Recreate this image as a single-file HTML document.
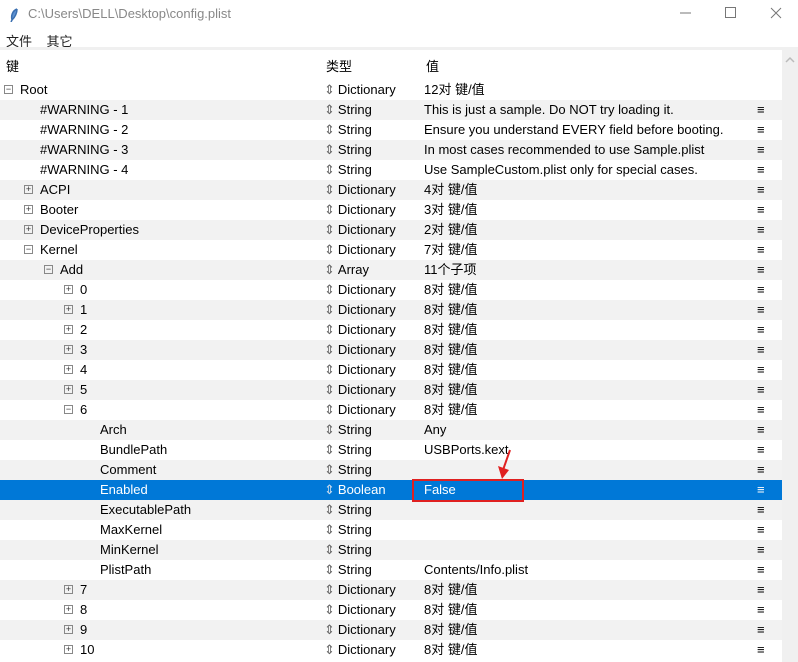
<!DOCTYPE html>
<html><head><meta charset="utf-8"><style>
*{margin:0;padding:0;box-sizing:border-box}
body{width:798px;height:662px;overflow:hidden;background:#fff;font-family:"Liberation Sans","Noto Sans CJK SC",sans-serif;font-size:13px;color:#000;position:relative}
.title{position:absolute;left:0;top:0;width:798px;height:30px;background:#fff}
.title .t{position:absolute;left:28px;top:6px;color:#888;font-size:13px}
.menu{position:absolute;top:31px;left:6px;font-size:13px;color:#222}
.strip{position:absolute;left:0;top:47px;width:798px;height:3px;background:#f0f0f0}
.sb{position:absolute;left:782px;top:50px;width:16px;height:612px;background:#f0f0f0}
.hdr{position:absolute;top:56px;font-size:13px}
.row{position:absolute;left:0;width:782px;height:20px;line-height:20px}
.g{background:#f2f2f2}
.sel{background:#0078d7;color:#fff}
.k,.ty,.v,.m{position:absolute;top:0;white-space:nowrap}
.ty{left:324px}
.ty i{font-style:normal;color:#666;margin-right:3px}
.sel .ty i{color:#cde}
.v{left:424px}
.m{left:757px;font-weight:bold}
.bx{position:absolute;top:5px;width:9px;height:9px;border:1px solid #888;font-size:9px;line-height:7px;text-align:center;color:#333}
</style></head><body>
<div class="title"><svg style="position:absolute;left:9px;top:8px" width="10" height="14"><path d="M8 1 C3 3 2 8 3 12 L2 14 M3 12 C6 9 8 5 8 1" stroke="#3a6fb0" stroke-width="1.5" fill="#5b8fd0"/></svg><span class="t">C:\Users\DELL\Desktop\config.plist</span>
<svg style="position:absolute;left:670px;top:5px" width="128" height="20"><line x1="10" y1="8" x2="21" y2="8" stroke="#777"/><rect x="55.5" y="2.5" width="10" height="10" fill="none" stroke="#777"/><path d="M101 3 L111 13 M111 3 L101 13" stroke="#777"/></svg></div>
<div class="menu">文件&nbsp;&nbsp;&nbsp;&nbsp;其它</div>
<div class="strip"></div>
<div class="sb"><svg style="position:absolute;left:3px;top:6px" width="10" height="8"><path d="M1 6 L5 2 L9 6" stroke="#bbb" fill="none" stroke-width="1.5"/></svg></div>
<div class="hdr" style="left:6px">键</div><div class="hdr" style="left:326px">类型</div><div class="hdr" style="left:426px">值</div>

<div class="row" style="top:80px"><span class="bx" style="left:4px">−</span><span class="k" style="left:20px">Root</span><span class="ty"><i>⇕</i>Dictionary</span><span class="v">12对 键/值</span></div>
<div class="row g" style="top:100px"><span class="k" style="left:40px">#WARNING - 1</span><span class="ty"><i>⇕</i>String</span><span class="v">This is just a sample. Do NOT try loading it.</span><span class="m">≡</span></div>
<div class="row" style="top:120px"><span class="k" style="left:40px">#WARNING - 2</span><span class="ty"><i>⇕</i>String</span><span class="v">Ensure you understand EVERY field before booting.</span><span class="m">≡</span></div>
<div class="row g" style="top:140px"><span class="k" style="left:40px">#WARNING - 3</span><span class="ty"><i>⇕</i>String</span><span class="v">In most cases recommended to use Sample.plist</span><span class="m">≡</span></div>
<div class="row" style="top:160px"><span class="k" style="left:40px">#WARNING - 4</span><span class="ty"><i>⇕</i>String</span><span class="v">Use SampleCustom.plist only for special cases.</span><span class="m">≡</span></div>
<div class="row g" style="top:180px"><span class="bx" style="left:24px">+</span><span class="k" style="left:40px">ACPI</span><span class="ty"><i>⇕</i>Dictionary</span><span class="v">4对 键/值</span><span class="m">≡</span></div>
<div class="row" style="top:200px"><span class="bx" style="left:24px">+</span><span class="k" style="left:40px">Booter</span><span class="ty"><i>⇕</i>Dictionary</span><span class="v">3对 键/值</span><span class="m">≡</span></div>
<div class="row g" style="top:220px"><span class="bx" style="left:24px">+</span><span class="k" style="left:40px">DeviceProperties</span><span class="ty"><i>⇕</i>Dictionary</span><span class="v">2对 键/值</span><span class="m">≡</span></div>
<div class="row" style="top:240px"><span class="bx" style="left:24px">−</span><span class="k" style="left:40px">Kernel</span><span class="ty"><i>⇕</i>Dictionary</span><span class="v">7对 键/值</span><span class="m">≡</span></div>
<div class="row g" style="top:260px"><span class="bx" style="left:44px">−</span><span class="k" style="left:60px">Add</span><span class="ty"><i>⇕</i>Array</span><span class="v">11个子项</span><span class="m">≡</span></div>
<div class="row" style="top:280px"><span class="bx" style="left:64px">+</span><span class="k" style="left:80px">0</span><span class="ty"><i>⇕</i>Dictionary</span><span class="v">8对 键/值</span><span class="m">≡</span></div>
<div class="row g" style="top:300px"><span class="bx" style="left:64px">+</span><span class="k" style="left:80px">1</span><span class="ty"><i>⇕</i>Dictionary</span><span class="v">8对 键/值</span><span class="m">≡</span></div>
<div class="row" style="top:320px"><span class="bx" style="left:64px">+</span><span class="k" style="left:80px">2</span><span class="ty"><i>⇕</i>Dictionary</span><span class="v">8对 键/值</span><span class="m">≡</span></div>
<div class="row g" style="top:340px"><span class="bx" style="left:64px">+</span><span class="k" style="left:80px">3</span><span class="ty"><i>⇕</i>Dictionary</span><span class="v">8对 键/值</span><span class="m">≡</span></div>
<div class="row" style="top:360px"><span class="bx" style="left:64px">+</span><span class="k" style="left:80px">4</span><span class="ty"><i>⇕</i>Dictionary</span><span class="v">8对 键/值</span><span class="m">≡</span></div>
<div class="row g" style="top:380px"><span class="bx" style="left:64px">+</span><span class="k" style="left:80px">5</span><span class="ty"><i>⇕</i>Dictionary</span><span class="v">8对 键/值</span><span class="m">≡</span></div>
<div class="row" style="top:400px"><span class="bx" style="left:64px">−</span><span class="k" style="left:80px">6</span><span class="ty"><i>⇕</i>Dictionary</span><span class="v">8对 键/值</span><span class="m">≡</span></div>
<div class="row g" style="top:420px"><span class="k" style="left:100px">Arch</span><span class="ty"><i>⇕</i>String</span><span class="v">Any</span><span class="m">≡</span></div>
<div class="row" style="top:440px"><span class="k" style="left:100px">BundlePath</span><span class="ty"><i>⇕</i>String</span><span class="v">USBPorts.kext</span><span class="m">≡</span></div>
<div class="row g" style="top:460px"><span class="k" style="left:100px">Comment</span><span class="ty"><i>⇕</i>String</span><span class="v"></span><span class="m">≡</span></div>
<div class="row sel" style="top:480px"><span class="k" style="left:100px">Enabled</span><span class="ty"><i>⇕</i>Boolean</span><span class="v">False</span><span class="m">≡</span></div>
<div class="row g" style="top:500px"><span class="k" style="left:100px">ExecutablePath</span><span class="ty"><i>⇕</i>String</span><span class="m">≡</span></div>
<div class="row" style="top:520px"><span class="k" style="left:100px">MaxKernel</span><span class="ty"><i>⇕</i>String</span><span class="m">≡</span></div>
<div class="row g" style="top:540px"><span class="k" style="left:100px">MinKernel</span><span class="ty"><i>⇕</i>String</span><span class="m">≡</span></div>
<div class="row" style="top:560px"><span class="k" style="left:100px">PlistPath</span><span class="ty"><i>⇕</i>String</span><span class="v">Contents/Info.plist</span><span class="m">≡</span></div>
<div class="row g" style="top:580px"><span class="bx" style="left:64px">+</span><span class="k" style="left:80px">7</span><span class="ty"><i>⇕</i>Dictionary</span><span class="v">8对 键/值</span><span class="m">≡</span></div>
<div class="row" style="top:600px"><span class="bx" style="left:64px">+</span><span class="k" style="left:80px">8</span><span class="ty"><i>⇕</i>Dictionary</span><span class="v">8对 键/值</span><span class="m">≡</span></div>
<div class="row g" style="top:620px"><span class="bx" style="left:64px">+</span><span class="k" style="left:80px">9</span><span class="ty"><i>⇕</i>Dictionary</span><span class="v">8对 键/值</span><span class="m">≡</span></div>
<div class="row" style="top:640px"><span class="bx" style="left:64px">+</span><span class="k" style="left:80px">10</span><span class="ty"><i>⇕</i>Dictionary</span><span class="v">8对 键/值</span><span class="m">≡</span></div>

<div style="position:absolute;left:412px;top:479px;width:112px;height:23px;border:2px solid #e02020"></div>
<svg style="position:absolute;left:495px;top:448px" width="20" height="34"><line x1="15" y1="2" x2="8" y2="22" stroke="#e02020" stroke-width="2"/><path d="M3 18 L14 22 L7 31 Z" fill="#e02020"/></svg>
</body></html>
